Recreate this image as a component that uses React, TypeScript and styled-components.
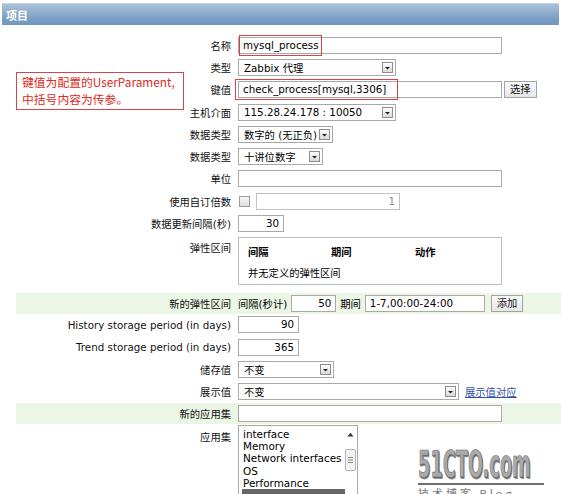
import * as React from 'react';
import styled, { createGlobalStyle } from 'styled-components';

const GlobalStyle = createGlobalStyle`
  html, body {
    margin: 0;
    padding: 0;
    background: #ffffff;
  }
  body {
    font-family: "DejaVu Sans", "Noto Sans CJK SC", sans-serif;
    font-size: 10.3px;
    color: #000000;
    overflow: hidden;
  }
`;

const FONT = `"DejaVu Sans", "Noto Sans CJK SC", sans-serif`;

const Page = styled.div`
  position: relative;
  width: 561px;
  height: 494px;
  padding-top: 3px;
  box-sizing: border-box;
  overflow: hidden;
`;

const TitleBar = styled.div`
  margin-left: 2px;
  width: 557px;
  height: 22px;
  box-sizing: border-box;
  padding-left: 4px;
  display: flex;
  align-items: center;
  border-top: 1px solid #c4d5e6;
  background: linear-gradient(#abc2d9, #7a9fc4 70%, #6f97bf);
  color: #ffffff;
  font-weight: bold;
  font-size: 11px;
`;

const Form = styled.div`
  margin-left: 16px;
  padding-top: 9px;
  display: flex;
  flex-direction: column;
`;

const Row = styled.div<{ $green?: boolean; $top?: boolean; $tail?: number }>`
  display: flex;
  align-items: ${(p) => (p.$top ? 'flex-start' : 'center')};
  min-height: ${(p) => (p.$green ? '21px' : '22.3px')};
  padding-bottom: ${(p) => p.$tail || 0}px;
  background: ${(p) => (p.$green ? '#ebf6e5' : 'transparent')};
`;

const Label = styled.div<{ $pad?: number }>`
  width: 222px;
  flex-shrink: 0;
  box-sizing: border-box;
  padding-right: 7px;
  padding-top: ${(p) => p.$pad || 0}px;
  text-align: right;
  white-space: nowrap;
  color: #111111;
`;

const Value = styled.div<{ $gap?: number }>`
  display: flex;
  align-items: center;
  gap: ${(p) => p.$gap ?? 4}px;
`;

const Field = styled.div`
  position: relative;
  display: flex;
`;

const TextField = styled.div<{ $w: number; $right?: boolean; $muted?: boolean }>`
  width: ${(p) => p.$w}px;
  height: 17px;
  box-sizing: border-box;
  padding: 0 4px;
  border: 1px solid ${(p) => (p.$muted ? '#c2c2c2' : '#a9a9a9')};
  background: #ffffff;
  font-family: ${FONT};
  font-size: 10.3px;
  line-height: 14px;
  color: ${(p) => (p.$muted ? '#8a8a8a' : '#000000')};
  text-align: ${(p) => (p.$right ? 'right' : 'left')};
  white-space: nowrap;
  overflow: hidden;
`;

const Highlight = styled.span<{ $left: number; $w: number }>`
  position: absolute;
  left: ${(p) => p.$left}px;
  top: -2px;
  bottom: -2px;
  width: ${(p) => p.$w}px;
  border: 1px solid #d84343;
  box-sizing: border-box;
  pointer-events: none;
`;

const SelectBox = styled.div<{ $w: number }>`
  width: ${(p) => p.$w}px;
  height: 17px;
  box-sizing: border-box;
  border: 1px solid #a9a9a9;
  background: #ffffff;
  display: flex;
  align-items: center;
  padding: 0 2px 0 5px;
`;

const SelectText = styled.span`
  flex: 1;
  white-space: nowrap;
  overflow: hidden;
`;

const DropIcon = () => (
  <svg width="11" height="11" viewBox="0 0 11 11">
    <defs>
      <linearGradient id="dropg" x1="0" y1="0" x2="0" y2="1">
        <stop offset="0" stopColor="#ffffff" />
        <stop offset="1" stopColor="#d8d8d8" />
      </linearGradient>
    </defs>
    <rect x="0.5" y="0.5" width="10" height="10" fill="url(#dropg)" stroke="#8d8d8d" />
    <path d="M3 5 L8 5 L5.5 7.6 Z" fill="#222222" />
  </svg>
);

const Select = ({ w, text }: { w: number; text: string }) => (
  <SelectBox $w={w}>
    <SelectText>{text}</SelectText>
    <DropIcon />
  </SelectBox>
);

const Button = styled.button<{ $lead?: number }>`
  height: 17px;
  box-sizing: border-box;
  margin: 0 0 0 ${(p) => p.$lead || 0}px;
  padding: 0 5px;
  border: 1px solid #a3a3a3;
  border-radius: 0;
  background: linear-gradient(#fbfbfb, #e6e6e6);
  font-family: ${FONT};
  font-size: 10.3px;
  color: #111111;
  line-height: 15px;
`;

const Checkbox = styled.span`
  width: 9px;
  height: 9px;
  margin: 0 6px 0 1px;
  border: 1px solid #9c9c9c;
  background: linear-gradient(#f6f6f6, #dedede);
`;

const IntervalBox = styled.div`
  width: 264px;
  height: 48px;
  margin-top: 2px;
  box-sizing: border-box;
  border: 1px solid #bdbdbd;
  padding: 6px 0 0 9px;
`;

const IntervalHead = styled.div`
  display: grid;
  grid-template-columns: 83px 84px auto;
  font-weight: bold;
  height: 14px;
`;

const IntervalEmpty = styled.div`
  margin-top: 7px;
`;

const InlineText = styled.span`
  white-space: nowrap;
`;

const Link = styled.a`
  color: #2f52a6;
  text-decoration: underline;
  white-space: nowrap;
  margin-left: 2px;
`;

const ListBox = styled.div`
  width: 120px;
  height: 80px;
  margin-top: 1px;
  box-sizing: border-box;
  border: 1px solid #a9a9a9;
  display: flex;
  overflow: hidden;
`;

const ListItems = styled.div`
  flex: 1;
  padding: 2px 0 0 3px;
  font-size: 10.4px;
`;

const ListItem = styled.div<{ $selected?: boolean }>`
  height: 12.3px;
  line-height: 12.3px;
  padding-left: 1px;
  white-space: nowrap;
  background: ${(p) => (p.$selected ? '#666666' : 'transparent')};
  color: ${(p) => (p.$selected ? '#ffffff' : '#000000')};
`;

const ScrollBar = styled.div`
  width: 11px;
  margin-right: 1px;
  display: flex;
  flex-direction: column;
  align-items: center;
  padding-top: 6px;
`;

const Thumb = styled.div`
  width: 9px;
  height: 20px;
  margin-top: 12px;
  border: 1px solid #b4b4b4;
  border-radius: 2px;
  background: #f2f2f2;
  display: flex;
  align-items: center;
  justify-content: center;
`;

const Note = styled.div`
  position: absolute;
  left: 16px;
  top: 72px;
  width: 168px;
  height: 38px;
  box-sizing: border-box;
  padding: 1px 0 0 5px;
  border: 1px solid #d24848;
  background: #ffffff;
  font-family: "Noto Sans CJK SC", sans-serif;
  font-size: 11.8px;
  line-height: 16.5px;
  color: #dd2a22;
  white-space: nowrap;
`;

const Watermark = styled.div`
  position: absolute;
  left: 418px;
  top: 446px;
  width: 126px;
`;

const WatermarkLogo = styled.div`
  font-family: "DejaVu Sans Condensed", "DejaVu Sans", sans-serif;
  font-weight: bold;
  font-size: 38px;
  line-height: 37px;
  color: #a9a9a9;
  -webkit-text-stroke: 0.6px #6a6a6a;
  text-shadow: 1px 1px 0 #5e5e5e, 2px 2px 0 #9a9a9a;
  transform: scaleX(0.52);
  transform-origin: left center;
  white-space: nowrap;
`;

const WatermarkRule = styled.div`
  height: 2px;
  background: #6e6e6e;
`;

const WatermarkSub = styled.div`
  font-family: "Noto Sans CJK SC", sans-serif;
  font-size: 11px;
  line-height: 12px;
  letter-spacing: 3px;
  color: #777777;
  margin-top: 2px;
  white-space: nowrap;
`;

const App = () => {
  return (
    <Page>
      <GlobalStyle />
      <TitleBar>项目</TitleBar>
      <Form>
        <Row>
          <Label>名称</Label>
          <Value>
            <Field>
              <TextField $w={264}>mysql_process</TextField>
              <Highlight $left={1} $w={83} />
            </Field>
          </Value>
        </Row>
        <Row>
          <Label>类型</Label>
          <Value>
            <Select w={158} text="Zabbix 代理" />
          </Value>
        </Row>
        <Row>
          <Label>键值</Label>
          <Value $gap={2}>
            <Field>
              <TextField $w={264}>check_process[mysql,3306]</TextField>
              <Highlight $left={-3} $w={163} />
            </Field>
            <Button>选择</Button>
          </Value>
        </Row>
        <Row>
          <Label>主机介面</Label>
          <Value>
            <Select w={158} text="115.28.24.178 : 10050" />
          </Value>
        </Row>
        <Row>
          <Label>数据类型</Label>
          <Value>
            <Select w={95} text="数字的 (无正负)" />
          </Value>
        </Row>
        <Row>
          <Label>数据类型</Label>
          <Value>
            <Select w={85} text="十讲位数字" />
          </Value>
        </Row>
        <Row>
          <Label>单位</Label>
          <Value>
            <TextField $w={264} />
          </Value>
        </Row>
        <Row>
          <Label>使用自订倍数</Label>
          <Value $gap={0}>
            <Checkbox />
            <TextField $w={144} $right $muted>
              1
            </TextField>
          </Value>
        </Row>
        <Row>
          <Label>数据更新间隔(秒)</Label>
          <Value>
            <TextField $w={46} $right>
              30
            </TextField>
          </Value>
        </Row>
        <Row $top $tail={8}>
          <Label $pad={5}>弹性区间</Label>
          <IntervalBox>
            <IntervalHead>
              <span>间隔</span>
              <span>期间</span>
              <span>动作</span>
            </IntervalHead>
            <IntervalEmpty>并无定义的弹性区间</IntervalEmpty>
          </IntervalBox>
        </Row>
        <Row $green>
          <Label>新的弹性区间</Label>
          <Value>
            <InlineText>间隔(秒计)</InlineText>
            <TextField $w={45} $right>
              50
            </TextField>
            <InlineText>期间</InlineText>
            <TextField $w={120}>1-7,00:00-24:00</TextField>
            <Button $lead={2}>添加</Button>
          </Value>
        </Row>
        <Row>
          <Label>History storage period (in days)</Label>
          <Value>
            <TextField $w={61} $right>
              90
            </TextField>
          </Value>
        </Row>
        <Row>
          <Label>Trend storage period (in days)</Label>
          <Value>
            <TextField $w={61} $right>
              365
            </TextField>
          </Value>
        </Row>
        <Row>
          <Label>储存值</Label>
          <Value>
            <Select w={96} text="不变" />
          </Value>
        </Row>
        <Row>
          <Label>展示值</Label>
          <Value>
            <Select w={221} text="不变" />
            <Link>展示值对应</Link>
          </Value>
        </Row>
        <Row $green>
          <Label>新的应用集</Label>
          <Value>
            <TextField $w={264} />
          </Value>
        </Row>
        <Row $top>
          <Label $pad={5}>应用集</Label>
          <ListBox>
            <ListItems>
              <ListItem>interface</ListItem>
              <ListItem>Memory</ListItem>
              <ListItem>Network interfaces</ListItem>
              <ListItem>OS</ListItem>
              <ListItem>Performance</ListItem>
              <ListItem $selected />
            </ListItems>
            <ScrollBar>
              <svg width="7" height="5" viewBox="0 0 7 5">
                <path d="M0.5 4.5 L3.5 0.8 L6.5 4.5 Z" fill="#333333" />
              </svg>
              <Thumb>
                <svg width="5" height="6" viewBox="0 0 5 6">
                  <path d="M0 0.5 H5 M0 3 H5 M0 5.5 H5" stroke="#8a8a8a" strokeWidth="1" />
                </svg>
              </Thumb>
            </ScrollBar>
          </ListBox>
        </Row>
      </Form>
      <Note>
        键值为配置的UserParament,
        <br />
        中括号内容为传参。
      </Note>
      <Watermark>
        <WatermarkLogo>51CTO.com</WatermarkLogo>
        <WatermarkRule />
        <WatermarkSub>技术博客 Blog</WatermarkSub>
      </Watermark>
    </Page>
  );
};

export default App;
